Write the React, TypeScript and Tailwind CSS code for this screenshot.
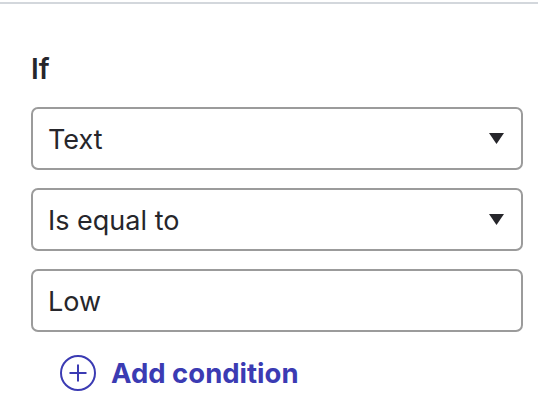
import React from 'react';

const Caret: React.FC = () => (
  <svg width="15" height="11" viewBox="0 0 15 11" className="shrink-0">
    <path d="M0 0 H15 L7.5 11 Z" fill="#26262b" />
  </svg>
);

const SelectBox: React.FC<{ value: string }> = ({ value }) => (
  <div className="flex h-[63px] items-center justify-between rounded-[7px] border-2 border-[#9b9b9b] pl-[15px] pr-[17px]">
    <span className="pt-[4px] text-[27px] text-[#26262b]">{value}</span>
    <Caret />
  </div>
);

export default function App() {
  return (
    <div className="min-h-screen bg-white" style={{ fontFamily: 'Inter, "Noto Sans", sans-serif' }}>
      <div className="pt-[2px]">
        <div className="h-[2px] bg-[#d3d7dc]" />
      </div>

      <div className="pl-[31px] pr-[15px] pt-[51px]">
        <h2 className="text-[28px] font-semibold leading-none text-[#26262b]">If</h2>

        <div className="mt-[24px] flex flex-col gap-[18px]">
          <SelectBox value="Text" />
          <SelectBox value="Is equal to" />
          <div className="flex h-[63px] items-center rounded-[7px] border-2 border-[#9b9b9b] pl-[15px] pr-[17px]">
            <span className="pt-[4px] text-[27px] text-[#26262b]">Low</span>
          </div>
        </div>

        <button className="mt-[20px] ml-[29px] flex items-center gap-[15px] text-[#3b3bb3]">
          <svg width="36" height="36" viewBox="0 0 36 36">
            <circle cx="18" cy="18" r="17" fill="none" stroke="currentColor" strokeWidth="2" />
            <path d="M18 9.5 V26.5 M9.5 18 H26.5" stroke="currentColor" strokeWidth="2" />
          </svg>
          <span className="pt-[1px] text-[27.5px] font-bold">Add condition</span>
        </button>
      </div>
    </div>
  );
}
